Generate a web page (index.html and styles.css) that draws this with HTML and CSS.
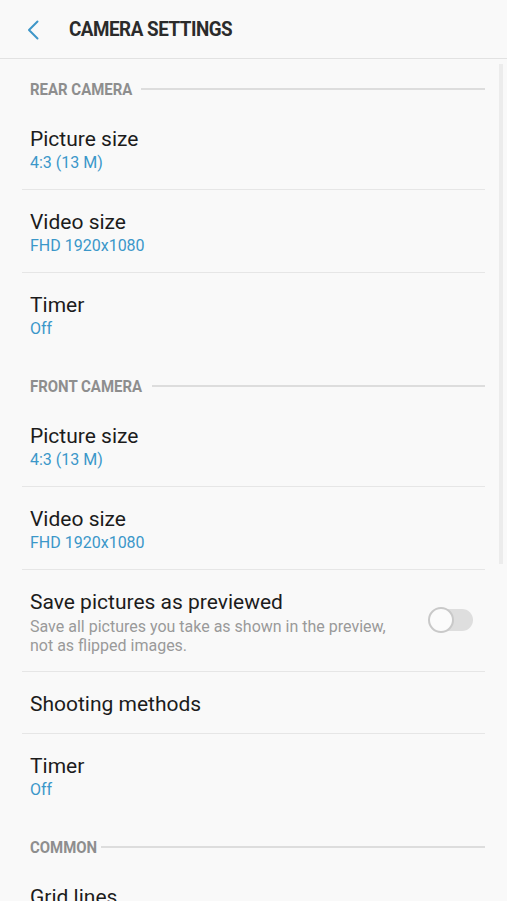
FILE: index.html
```html
<!DOCTYPE html>
<html lang="en">
<head>
    <meta charset="UTF-8">
    <meta name="viewport" content="width=device-width, initial-scale=1.0">
    <title>Camera Settings</title>
    <link rel="stylesheet" href="styles.css">
</head>
<body>
    <div class="app-bar">
        <svg class="back" width="14" height="20" viewBox="0 0 14 20">
            <path d="M11.5 1.5 L3 10 L11.5 18.5" fill="none" stroke="#3e96c8" stroke-width="2" stroke-linecap="round" stroke-linejoin="round"/>
        </svg>
        <div class="title">CAMERA SETTINGS</div>
    </div>

    <div class="content">
        <div class="scrollbar"></div>

        <div class="section-head"><span>REAR CAMERA</span><div class="rule"></div></div>
        <div class="list">
            <div class="row">
                <div class="row-title">Picture size</div>
                <div class="row-value">4:3 (13 M)</div>
            </div>
            <div class="row">
                <div class="row-title">Video size</div>
                <div class="row-value">FHD 1920x1080</div>
            </div>
            <div class="row last">
                <div class="row-title">Timer</div>
                <div class="row-value">Off</div>
            </div>
        </div>

        <div class="section-head"><span>FRONT CAMERA</span><div class="rule"></div></div>
        <div class="list">
            <div class="row">
                <div class="row-title">Picture size</div>
                <div class="row-value">4:3 (13 M)</div>
            </div>
            <div class="row">
                <div class="row-title">Video size</div>
                <div class="row-value">FHD 1920x1080</div>
            </div>
            <div class="row switch-row">
                <div class="row-text">
                    <div class="row-title">Save pictures as previewed</div>
                    <div class="row-desc">Save all pictures you take as shown in the preview, not as flipped images.</div>
                </div>
                <div class="toggle"><div class="knob"></div></div>
            </div>
            <div class="row single">
                <div class="row-title">Shooting methods</div>
            </div>
            <div class="row last">
                <div class="row-title">Timer</div>
                <div class="row-value">Off</div>
            </div>
        </div>

        <div class="section-head"><span>COMMON</span><div class="rule"></div></div>
        <div class="list">
            <div class="row">
                <div class="row-title">Grid lines</div>
            </div>
        </div>
    </div>
</body>
</html>
```

FILE: styles.css
```css
body {
    font-family: Roboto, 'Noto Sans', sans-serif;
    background-color: #f9f9f9;
    color: #1c1c1c;
    margin: 0;
    padding: 0;
    overflow: hidden;
}
.app-bar {
    height: 59px;
    display: flex;
    align-items: center;
    border-bottom: 1px solid #e2e2e2;
    box-sizing: border-box;
}
.back {
    margin-left: 26px;
    margin-top: 1px;
}
.title {
    margin-left: 29px;
    font-size: 20px;
    font-weight: bold;
    letter-spacing: -0.5px;
    color: #2b2b2b;
    transform: scaleX(0.94);
    transform-origin: left center;
}
.content {
    position: relative;
}
.scrollbar {
    position: absolute;
    top: 5px;
    right: 4px;
    width: 4px;
    height: 500px;
    background-color: #ececec;
}
.section-head {
    display: flex;
    align-items: center;
    height: 48px;
    box-sizing: border-box;
    padding: 20px 22px 8px 30px;
    line-height: 20px;
    font-size: 17px;
    font-weight: bold;
    color: #8e8e8e;
}
.section-head span {
    transform: scaleX(0.88);
    transform-origin: left center;
    margin-right: -5px;
}
.rule {
    flex: 1;
    height: 2px;
    background-color: #dddddd;
}
.list {
    margin: 0 22px;
}
.row {
    padding: 20px 0 14px 8px;
    border-bottom: 1px solid #e6e6e6;
}
.row.last {
    border-bottom: none;
    padding-bottom: 15px;
}
.row-title {
    font-size: 21px;
    line-height: 24px;
}
.row-value {
    font-size: 16px;
    line-height: 24px;
    color: #3b97c9;
}
.single {
    padding-bottom: 17px;
}
.switch-row {
    display: flex;
    align-items: center;
    padding-bottom: 16px;
    padding-right: 12px;
}
.row-text {
    flex: 1;
}
.row-desc {
    font-size: 16px;
    line-height: 19px;
    color: #9a9a9a;
    margin-top: 3px;
    width: 360px;
}
.toggle {
    position: relative;
    width: 44px;
    height: 22px;
    border-radius: 11px;
    background-color: #dedede;
    margin-top: -6px;
}
.knob {
    position: absolute;
    left: -1px;
    top: -2px;
    width: 26px;
    height: 26px;
    border-radius: 50%;
    background-color: #fbfbfb;
    border: 2px solid #c9c9c9;
    box-sizing: border-box;
}
```
